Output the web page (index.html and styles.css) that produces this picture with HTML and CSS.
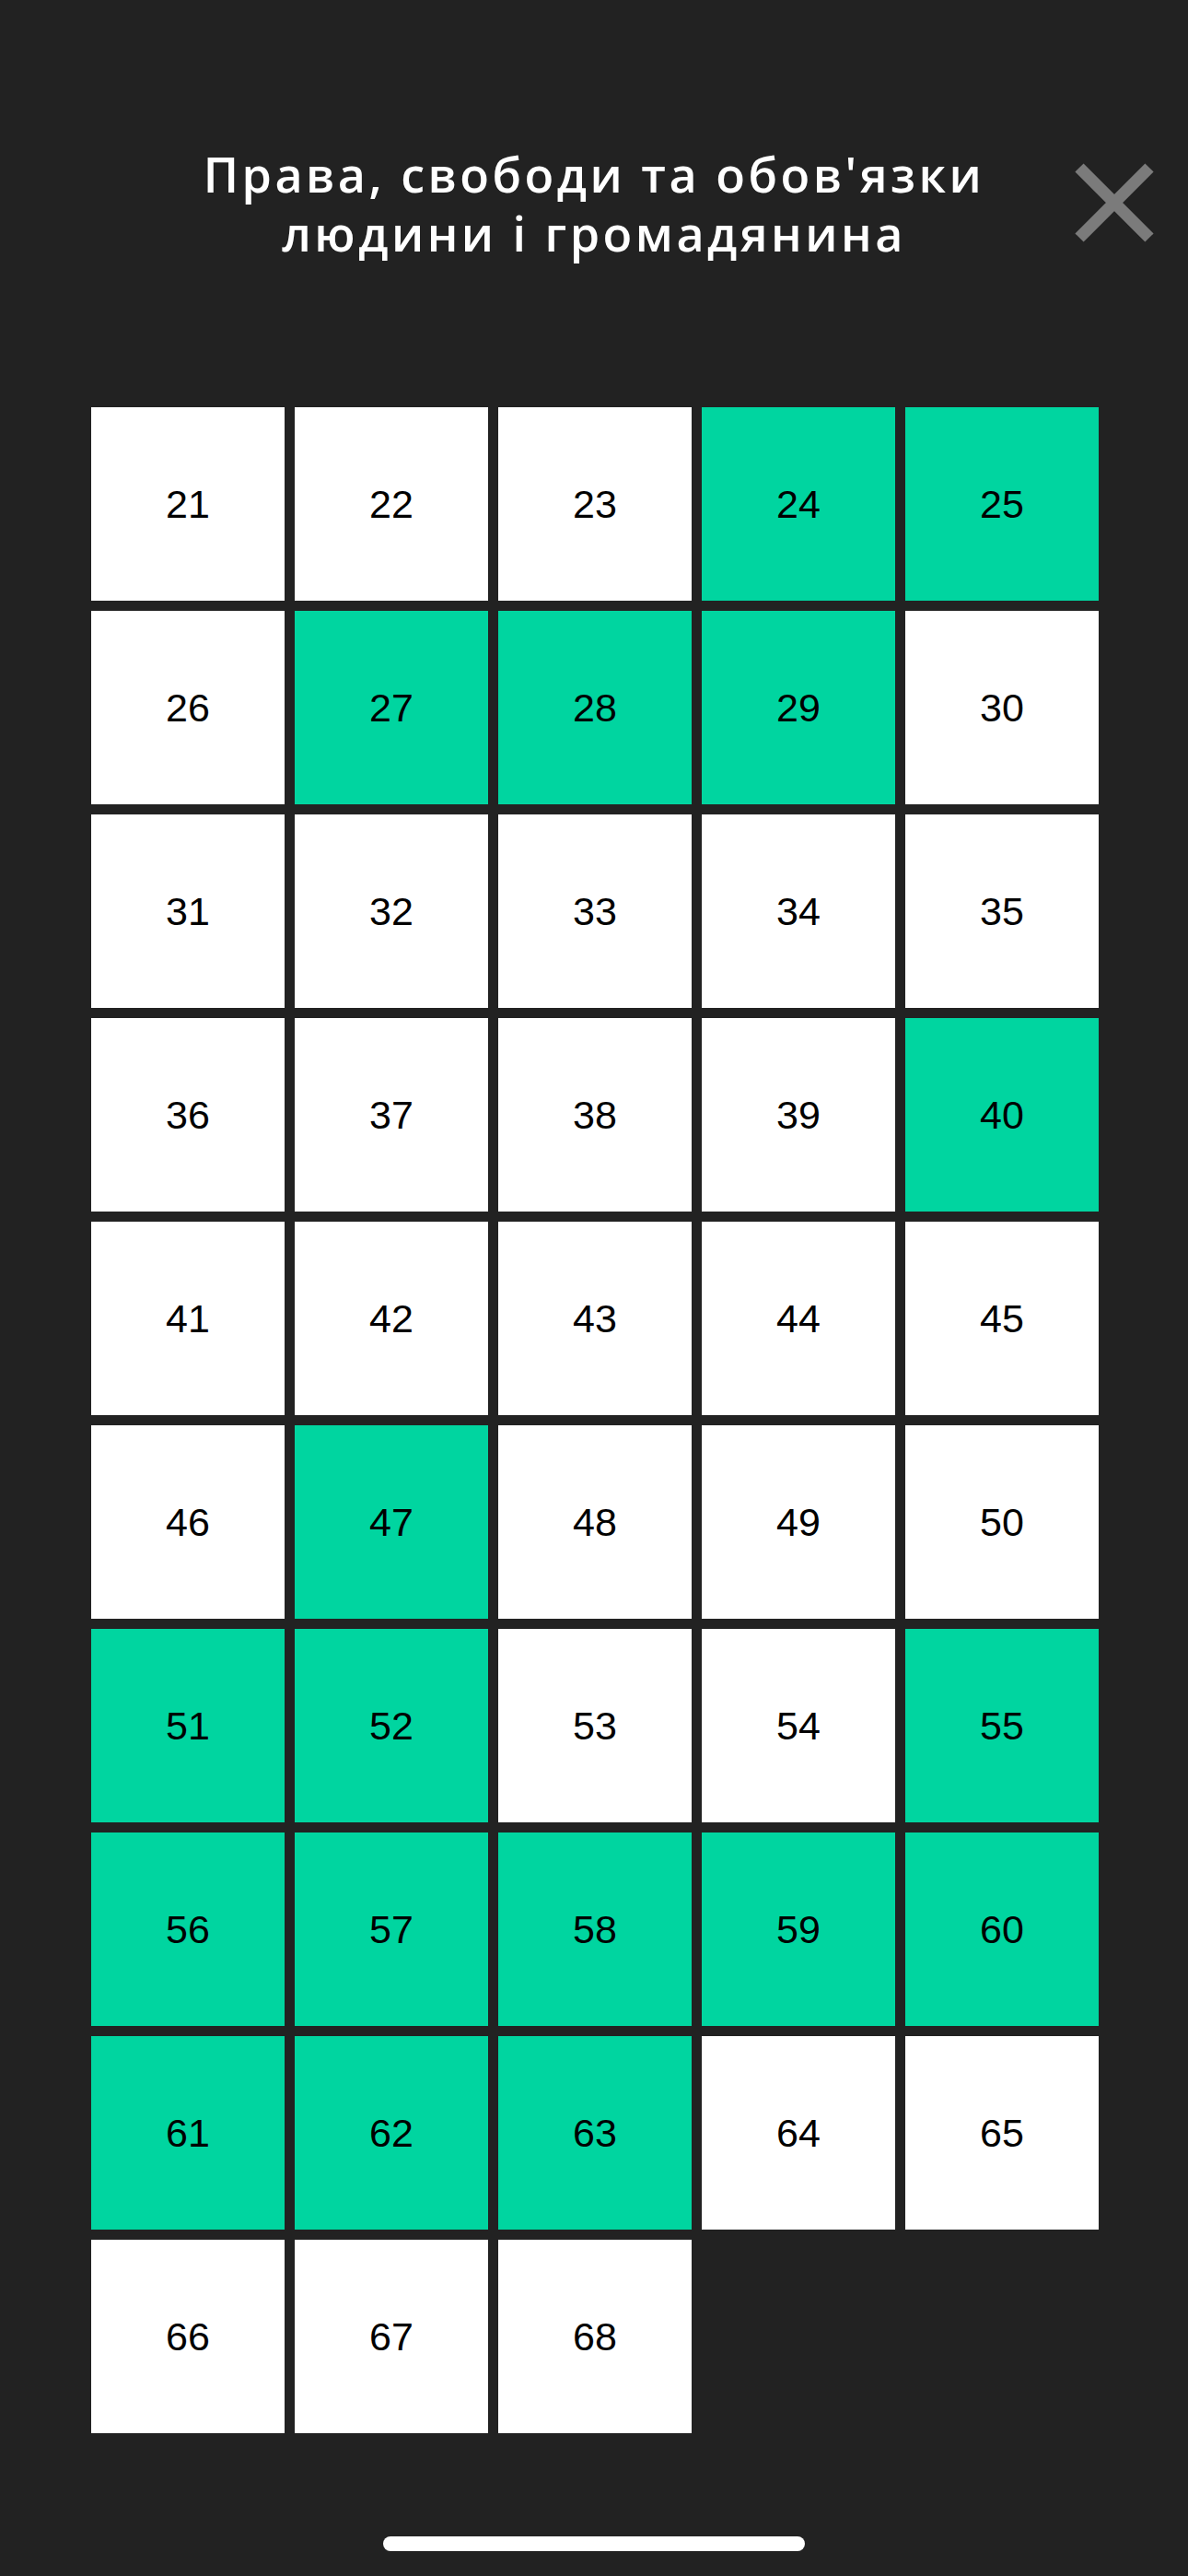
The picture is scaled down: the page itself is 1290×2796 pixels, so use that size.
FILE: index.html
```html
<!DOCTYPE html>
<html lang="uk">
<head>
<meta charset="utf-8">
<title>Права, свободи та обов'язки людини і громадянина</title>
<link rel="stylesheet" href="styles.css">
</head>
<body>
<div class="screen">
  <header class="header">
    <h1 class="title">Права, свободи та обов'язки<br>людини і громадянина</h1>
    <button class="close" aria-label="Закрити">
      <svg viewBox="0 0 86 86" width="86" height="86">
        <path d="M5 5 L81 81 M81 5 L5 81" stroke="#7b7b7b" stroke-width="13" stroke-linecap="butt" fill="none"/>
      </svg>
    </button>
  </header>
  <main class="grid">
    <div class="cell">21</div>
    <div class="cell">22</div>
    <div class="cell">23</div>
    <div class="cell done">24</div>
    <div class="cell done">25</div>
    <div class="cell">26</div>
    <div class="cell done">27</div>
    <div class="cell done">28</div>
    <div class="cell done">29</div>
    <div class="cell">30</div>
    <div class="cell">31</div>
    <div class="cell">32</div>
    <div class="cell">33</div>
    <div class="cell">34</div>
    <div class="cell">35</div>
    <div class="cell">36</div>
    <div class="cell">37</div>
    <div class="cell">38</div>
    <div class="cell">39</div>
    <div class="cell done">40</div>
    <div class="cell">41</div>
    <div class="cell">42</div>
    <div class="cell">43</div>
    <div class="cell">44</div>
    <div class="cell">45</div>
    <div class="cell">46</div>
    <div class="cell done">47</div>
    <div class="cell">48</div>
    <div class="cell">49</div>
    <div class="cell">50</div>
    <div class="cell done">51</div>
    <div class="cell done">52</div>
    <div class="cell">53</div>
    <div class="cell">54</div>
    <div class="cell done">55</div>
    <div class="cell done">56</div>
    <div class="cell done">57</div>
    <div class="cell done">58</div>
    <div class="cell done">59</div>
    <div class="cell done">60</div>
    <div class="cell done">61</div>
    <div class="cell done">62</div>
    <div class="cell done">63</div>
    <div class="cell">64</div>
    <div class="cell">65</div>
    <div class="cell">66</div>
    <div class="cell">67</div>
    <div class="cell">68</div>
  </main>
  <div class="home-bar"></div>
</div>
</body>
</html>
```
FILE: styles.css
```css
html, body {
  margin: 0;
  padding: 0;
  background: #222222;
}

.screen {
  width: 1290px;
  min-height: 2796px;
  background: #222222;
  display: flex;
  flex-direction: column;
  align-items: center;
}

.header {
  position: relative;
  width: 100%;
  height: 442px;
  box-sizing: border-box;
  padding-top: 157px;
  display: flex;
  justify-content: center;
  align-items: flex-start;
}

.title {
  margin: 0;
  color: #ffffff;
  font-family: "Open Sans", "Noto Sans", sans-serif;
  font-weight: 600;
  font-size: 52px;
  line-height: 64px;
  letter-spacing: 3.5px;
  text-align: center;
}

.close {
  position: absolute;
  top: 177px;
  left: 1167px;
  width: 86px;
  height: 86px;
  padding: 0;
  border: 0;
  background: transparent;
  display: block;
}

.close svg {
  display: block;
}

.grid {
  display: grid;
  grid-template-columns: repeat(5, 210px);
  grid-auto-rows: 210px;
  gap: 11px;
  margin-left: 2px;
}

.cell {
  background: #ffffff;
  color: #000000;
  font-family: "Liberation Sans", Arial, sans-serif;
  font-size: 43px;
  display: flex;
  align-items: center;
  justify-content: center;
}

.cell.done {
  background: #00d5a0;
}

.home-bar {
  margin-top: 112px;
  width: 458px;
  height: 16px;
  border-radius: 8px;
  background: #ffffff;
}
```
